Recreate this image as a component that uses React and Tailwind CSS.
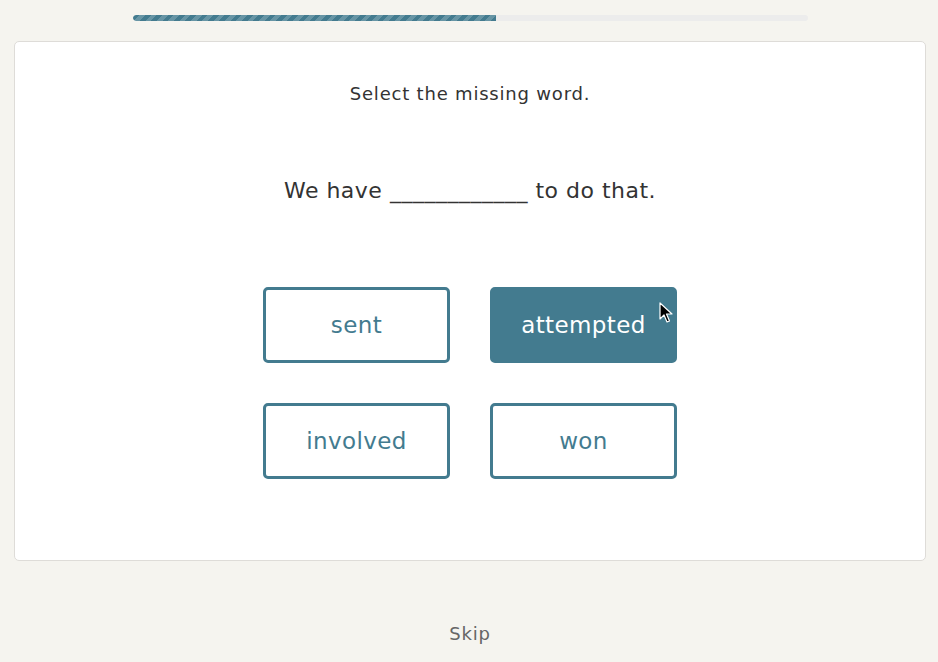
export default function App() {
  const options = [
    { id: 'sent', label: 'sent' },
    { id: 'attempted', label: 'attempted', active: true },
    { id: 'involved', label: 'involved' },
    { id: 'won', label: 'won' },
  ];

  return (
    <div
      className="min-h-[662px] bg-[#f5f4ef] pl-[14px] pr-[12px] pt-[15px] text-[#333]"
      style={{ fontFamily: "'DejaVu Sans', 'Liberation Sans', sans-serif" }}
    >
      {/* progress */}
      <div className="mx-auto h-[6px] w-[675px] overflow-hidden rounded-full bg-[#ececec]">
        <div className="h-full w-[363px] rounded-l-full bg-[repeating-linear-gradient(-45deg,#437b8f_0_4px,#6795a5_4px_8px)]" />
      </div>

      {/* card */}
      <div className="mt-[20px] flex h-[520px] flex-col items-center rounded-[5px] border border-[#dedcd8] bg-white pt-[40px]">
        <p className="text-[18px] leading-[24px] tracking-[0.8px] text-[#333]">Select the missing word.</p>
        <p className="mt-[70px] text-[22px] leading-[30px] tracking-[0.5px] text-[#333]">
          We have ____________ to do that.
        </p>

        <div className="mt-[81px] grid grid-cols-[187px_187px] gap-x-[40px] gap-y-[40px]">
          {options.map((o) => (
            <button
              key={o.id}
              className={
                o.active
                  ? 'relative flex h-[76px] items-center justify-center rounded-[5px] border-[3px] border-[#437b8f] bg-[#437b8f] text-[23px] tracking-[0.4px] text-white'
                  : 'relative flex h-[76px] items-center justify-center rounded-[5px] border-[3px] border-[#437b8f] bg-white text-[23px] tracking-[0.4px] text-[#437b8f]'
              }
            >
              {o.label}
              {o.active && (
                <svg className="absolute left-[166px] top-[12px] h-[22px] w-[14px]" viewBox="0 0 14 22">
                  <path d="M1 1 L1 17 L5 13 L8 20 L10.5 19 L7.5 12 L13 12 Z" fill="#000" stroke="#fff" strokeWidth="1.2" strokeLinejoin="round" />
                </svg>
              )}
            </button>
          ))}
        </div>
      </div>

      <div className="mt-[61px] text-center text-[18px] leading-[24px] tracking-[0.8px] text-[#666]">Skip</div>
    </div>
  );
}
